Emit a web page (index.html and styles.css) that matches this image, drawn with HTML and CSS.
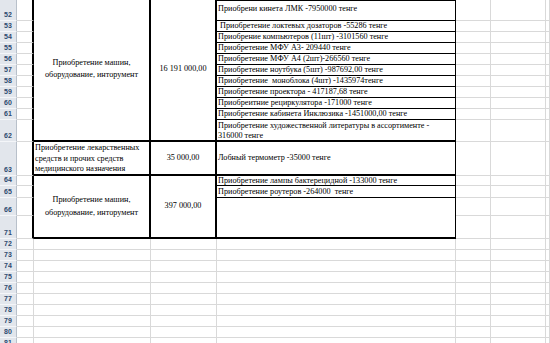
FILE: index.html
```html
<!DOCTYPE html>
<html lang="ru">
<head>
  <meta charset="UTF-8" />
  <title>Лист1</title>
  <link rel="stylesheet" href="styles.css">
</head>
<body>
  <div class="sheet">
    <!-- 52 -->
    <div class="rh">52</div><div class="c edge"></div>
    <div class="t span-b mid">Приобретение машин,<br>оборудование, инторумент</div>
    <div class="t span-b mid">16 191 000,00</div>
    <div class="t d top first">Приобрени кинета ЛМК -7950000 тенге</div>
    <div class="c"></div><div class="c"></div><div class="c"></div>
    <!-- 53 -->
    <div class="rh">53</div><div class="c edge"></div>
    <div class="t d">&nbsp;Приобретение локтевых дозаторов -55286 тенге</div>
    <div class="c"></div><div class="c"></div><div class="c"></div>
    <!-- 54 -->
    <div class="rh">54</div><div class="c edge"></div>
    <div class="t d">Приобрение компьютеров (11шт) -3101560 тенге</div>
    <div class="c"></div><div class="c"></div><div class="c"></div>
    <!-- 55 -->
    <div class="rh">55</div><div class="c edge"></div>
    <div class="t d">Приобретение МФУ А3- 209440 тенге</div>
    <div class="c"></div><div class="c"></div><div class="c"></div>
    <!-- 56 -->
    <div class="rh">56</div><div class="c edge"></div>
    <div class="t d">Приобретение МФУ А4 (2шт)-266560 тенге</div>
    <div class="c"></div><div class="c"></div><div class="c"></div>
    <!-- 57 -->
    <div class="rh">57</div><div class="c edge"></div>
    <div class="t d">Приобретение ноутбука (5шт) -987692,00 тенге</div>
    <div class="c"></div><div class="c"></div><div class="c"></div>
    <!-- 58 -->
    <div class="rh">58</div><div class="c edge"></div>
    <div class="t d">Приобретение &nbsp;моноблока (4шт) -1435974тенге</div>
    <div class="c"></div><div class="c"></div><div class="c"></div>
    <!-- 59 -->
    <div class="rh">59</div><div class="c edge"></div>
    <div class="t d">Приобретение проектора - 417187,68 тенге</div>
    <div class="c"></div><div class="c"></div><div class="c"></div>
    <!-- 60 -->
    <div class="rh">60</div><div class="c edge"></div>
    <div class="t d">Приобреитние рециркулятора -171000 тенге</div>
    <div class="c"></div><div class="c"></div><div class="c"></div>
    <!-- 61 -->
    <div class="rh">61</div><div class="c edge"></div>
    <div class="t d">Приобретение кабинета Инклюзика -1451000,00 тенге</div>
    <div class="c"></div><div class="c"></div><div class="c"></div>
    <!-- 62 -->
    <div class="rh">62</div><div class="c edge"></div>
    <div class="t d thick top wrap">Приобретение художественной литературы в ассортименте -<br>316000 тенге</div>
    <div class="c"></div><div class="c"></div><div class="c"></div>
    <!-- 63 -->
    <div class="rh">63</div><div class="c edge"></div>
    <div class="t b-left">Приобретение лекарственных<br>средств и прочих средств<br>медицинского назначения</div>
    <div class="t mid">35 000,00</div>
    <div class="t d thick">Лобный термометр -35000 тенге</div>
    <div class="c"></div><div class="c"></div><div class="c"></div>
    <!-- 64 -->
    <div class="rh">64</div><div class="c edge"></div>
    <div class="t span-e mid">Приобретение машин,<br>оборудование, инторумент</div>
    <div class="t span-e mid">397 000,00</div>
    <div class="t d">Приобретение лампы бактерецидной -133000 тенге</div>
    <div class="c"></div><div class="c"></div><div class="c"></div>
    <!-- 65 -->
    <div class="rh">65</div><div class="c edge"></div>
    <div class="t d">Приобретение роутеров -264000 &nbsp;тенге</div>
    <div class="c"></div><div class="c"></div><div class="c"></div>
    <!-- 66 -->
    <div class="rh">66</div><div class="c edge"></div>
    <div class="t d thick span-2"></div>
    <div class="c"></div><div class="c"></div><div class="c"></div>
    <!-- 71 -->
    <div class="rh">71</div><div class="c edge"></div>
    <div class="c"></div><div class="c"></div><div class="c"></div>
    <!-- 72 -->
    <div class="rh">72</div><div class="c"></div><div class="c"></div><div class="c"></div><div class="c"></div><div class="c"></div><div class="c"></div><div class="c"></div>
    <div class="rh">73</div><div class="c"></div><div class="c"></div><div class="c"></div><div class="c"></div><div class="c"></div><div class="c"></div><div class="c"></div>
    <div class="rh">74</div><div class="c"></div><div class="c"></div><div class="c"></div><div class="c"></div><div class="c"></div><div class="c"></div><div class="c"></div>
    <div class="rh">75</div><div class="c"></div><div class="c"></div><div class="c"></div><div class="c"></div><div class="c"></div><div class="c"></div><div class="c"></div>
    <div class="rh">76</div><div class="c"></div><div class="c"></div><div class="c"></div><div class="c"></div><div class="c"></div><div class="c"></div><div class="c"></div>
    <div class="rh">77</div><div class="c"></div><div class="c"></div><div class="c"></div><div class="c"></div><div class="c"></div><div class="c"></div><div class="c"></div>
    <div class="rh">78</div><div class="c"></div><div class="c"></div><div class="c"></div><div class="c"></div><div class="c"></div><div class="c"></div><div class="c"></div>
    <div class="rh">79</div><div class="c"></div><div class="c"></div><div class="c"></div><div class="c"></div><div class="c"></div><div class="c"></div><div class="c"></div>
    <div class="rh">80</div><div class="c"></div><div class="c"></div><div class="c"></div><div class="c"></div><div class="c"></div><div class="c"></div><div class="c"></div>
    <div class="rh">81</div><div class="c"></div><div class="c"></div><div class="c"></div><div class="c"></div><div class="c"></div><div class="c"></div><div class="c"></div>
  </div>
</body>
</html>
```

FILE: styles.css
```css
html, body {
  margin: 0;
  padding: 0;
  background: #ffffff;
  overflow: hidden;
}

.sheet {
  display: grid;
  grid-template-columns: 17px 17px 117px 66px 239px 35px 55px 1fr;
  grid-template-rows: 21px repeat(9, 11px) 22px 34px 10px 12px 18px 23px repeat(10, 11px);
  width: 550px;
  height: 343px;
  overflow: hidden;
  font-family: "Liberation Serif", "Times New Roman", serif;
  font-size: 8.2px;
  color: #000;
}

.sheet > div {
  box-sizing: border-box;
  min-width: 0;
  overflow: hidden;
}

/* row headers */
.rh {
  background: #e2e6ec;
  border-right: 1px solid #b8c0ca;
  border-bottom: 1px solid #f4f6f9;
  color: #2d4a70;
  font-family: "Liberation Sans", Arial, sans-serif;
  font-size: 7px;
  font-weight: bold;
  display: flex;
  align-items: flex-end;
  justify-content: center;
  padding-bottom: 1px;
  line-height: 8px;
}

/* plain grid cells */
.c {
  border-right: 1px solid #d9d9d9;
  border-bottom: 1px solid #d9d9d9;
}

.c.edge {
  border-right: 2px solid #000;
}

/* bordered table cells */
.t {
  border-right: 2px solid #000;
  border-bottom: 2px solid #000;
  white-space: nowrap;
}

.mid {
  display: flex;
  align-items: center;
  justify-content: center;
  text-align: center;
  line-height: 12.5px;
}

.span-b {
  grid-row: span 11;
  padding-bottom: 2px;
}

.span-e {
  grid-row: span 4;
}

.span-2 {
  grid-row: span 2;
}

.b-left {
  line-height: 10.5px;
  padding: 1px 0 0 1px;
}

.d {
  border-right: 1px solid #000;
  border-bottom: 1px solid #000;
  padding-left: 1px;
  line-height: 10px;
  display: flex;
  align-items: center;
}

.d.top {
  align-items: flex-start;
}

.d.first {
  border-top: 1px solid #000;
  padding-top: 3px;
}

.d.wrap {
  padding-top: 1px;
  line-height: 9.5px;
}

.d.thick {
  border-bottom: 2px solid #000;
}
```
